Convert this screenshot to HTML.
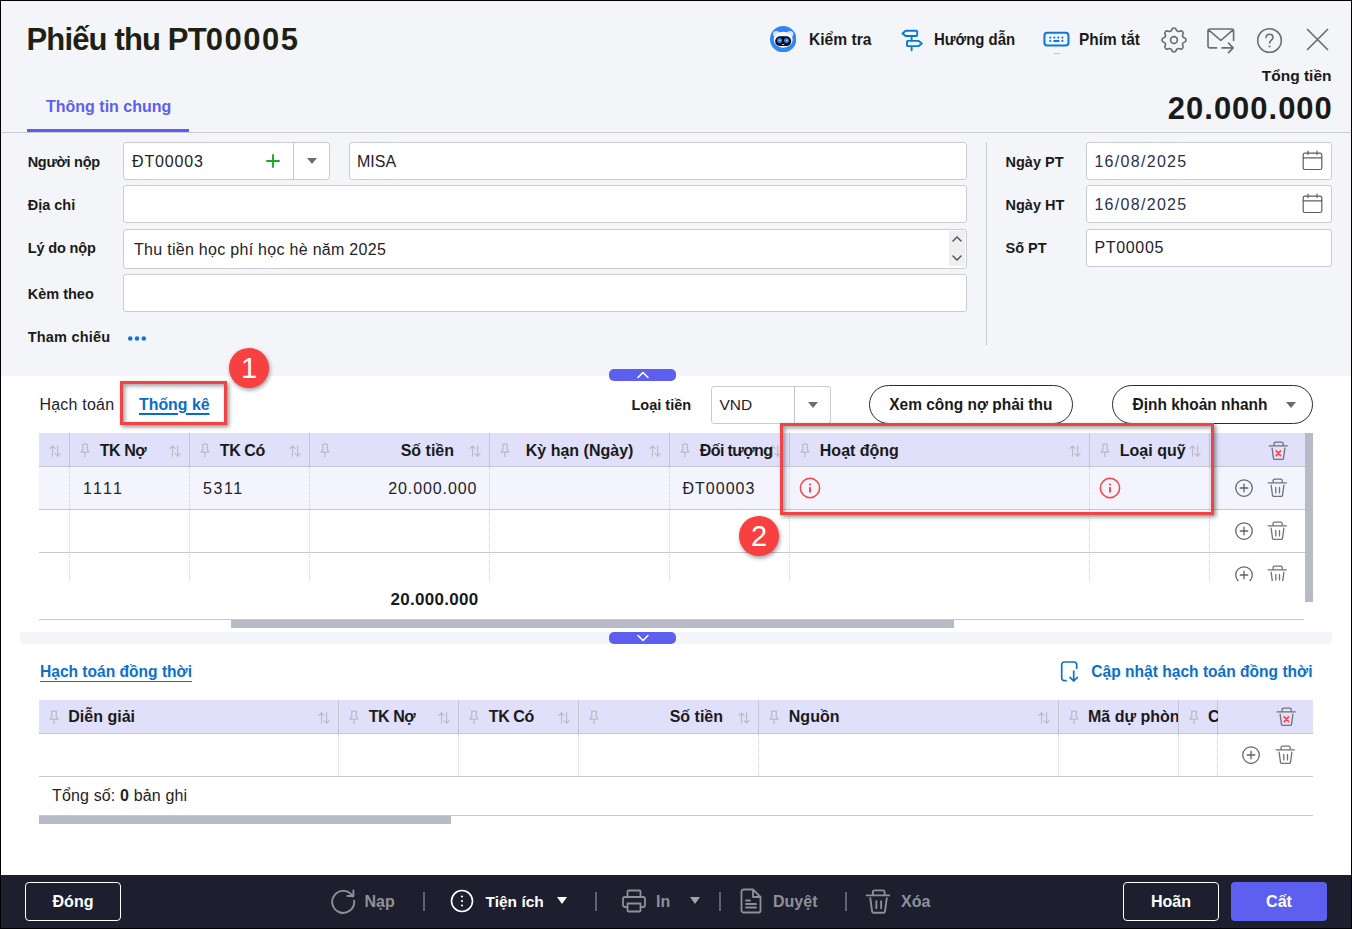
<!DOCTYPE html>
<html lang="vi">
<head>
<meta charset="utf-8">
<title>Phiếu thu PT00005</title>
<style>
*{box-sizing:border-box;margin:0;padding:0}
html,body{width:1352px;height:929px;overflow:hidden;background:#fff}
body{font-family:"Liberation Sans",sans-serif;color:#1f1f1f;font-size:16px;position:relative}
.abs{position:absolute}
#frame{position:absolute;left:0;top:0;width:1352px;height:929px;border:1px solid #000;border-bottom-width:1px;z-index:50;pointer-events:none}
#top{position:absolute;left:0;top:0;width:1352px;height:376px;background:#f4f5f8}
.t{position:absolute;white-space:nowrap;line-height:1}
.b{font-weight:bold}
.inp{position:absolute;background:#fff;border:1px solid #c9ccd3;border-radius:3px}
.lbl{position:absolute;font-weight:bold;font-size:14.500px;white-space:nowrap;line-height:1;color:#1a1a1a;left:27.700px}
.val{position:absolute;font-size:16px;white-space:nowrap;line-height:1;color:#1f2229}
/* grid */
.gh{position:absolute;background:#e0e0fb;border-bottom:1px solid #c6c8d0}
.hc{position:absolute;top:0;height:100%;font-weight:bold;font-size:16px;line-height:1;color:#1a1a1a;white-space:nowrap}
.vsep{position:absolute;width:1px;background:#c3c5cf}
.hline{position:absolute;height:1px;background:#c6c8d0}
.dot{position:absolute;width:0;border-left:1px dotted #cfd1d8}
#foot{position:absolute;left:0;top:875px;width:1352px;height:54px;background:#1d1f2e}
.fb{position:absolute;font-weight:bold;font-size:16px;line-height:1;white-space:nowrap}

.hd{font-size:16px;color:#1a1a1a}
.num{letter-spacing:.8px}
.pill{display:flex;align-items:center;justify-content:center;border:1px solid #2a2c33;border-radius:20px;background:#fff;font-weight:bold;font-size:15.500px;color:#1a1a1a;white-space:nowrap}
.anno{border:3px solid #f04345;box-shadow:2px 2px 4px rgba(0,0,0,.42),inset 2px 2px 4px rgba(0,0,0,.38);z-index:20}
.badge{width:40px;height:40px;border-radius:50%;background:#f7403f;color:#fff;font-size:29px;line-height:40px;text-align:center;box-shadow:1px 2px 4px rgba(0,0,0,.4);z-index:21}
.fbtn{display:flex;align-items:center;justify-content:center;border-radius:4px;font-weight:bold;font-size:16px;white-space:nowrap}
.fsep{top:892px;width:1.500px;height:19px;background:#5f6270}
.tb{font-size:16.500px;color:#1a1a1a;transform-origin:0 50%}
.dt{letter-spacing:1.300px;color:#2b3050;margin-left:-.6px}
</style>
</head>
<body>
<div id="top"></div>

<!-- HEADER -->
<div class="t b" id="title" style="left:26.500px;top:24px;font-size:31px;letter-spacing:-.85px;color:#1f1f14">Phiếu thu PT<span style="letter-spacing:1.500px">00005</span></div>

<div class="t b" id="tab" style="left:46px;top:99px;font-size:16px;color:#5d5fef">Thông tin chung</div>
<div class="abs" style="left:27px;top:129px;width:162px;height:3px;background:#5d5fef"></div>
<div class="abs" style="left:1px;top:132px;width:1350px;height:1px;background:#c9cbd2"></div>

<div class="t b" id="tongtien" style="right:20.500px;top:67.500px;font-size:15.500px;color:#1a1a1a">Tổng tiền</div>
<div class="t b" id="bignum" style="right:19.200px;top:93px;font-size:31px;letter-spacing:.98px;color:#1a1a1a">20.000.000</div>

<!-- HEADER TOOLBAR -->
<svg class="abs" style="left:769.900px;top:25.700px" width="26.400" height="26.400" viewBox="0 0 26.400 26.400"><circle cx="13.200" cy="13.200" r="13.200" fill="#2f87f5"/><ellipse cx="6.300" cy="7.900" rx="3.300" ry="2.900" fill="#d7e6fb"/><ellipse cx="20.100" cy="7.900" rx="3.300" ry="2.900" fill="#d7e6fb"/><ellipse cx="13.200" cy="13.700" rx="9.500" ry="8" fill="#f6f9fe"/><rect x="5.200" y="10.300" width="16" height="9.800" rx="4.900" fill="#070910"/><circle cx="9.600" cy="14.600" r="2.500" fill="#2f87f5"/><circle cx="16.500" cy="14.600" r="2.500" fill="#2f87f5"/><circle cx="9.900" cy="14.400" r=".7" fill="#eaf2fd"/><circle cx="16.800" cy="14.400" r=".7" fill="#eaf2fd"/><rect x="12" y="18" width="2.400" height=".9" rx=".4" fill="#cdd5e3"/></svg>
<div class="t b tb" style="left:808.500px;top:30.700px;transform:scaleX(.945)">Kiểm tra</div>
<svg class="abs" style="left:900px;top:28px" width="24" height="24" viewBox="0 0 24 24"><path d="M5.600 2.800h10.700a.9.900 0 0 1 .9.900v3.400a.9.900 0 0 1-.9.900H5.600L2.500 5.400zM7.900 12.900h10.800l3.100 2.600-3.100 2.600H7.900a.9.900 0 0 1-.9-.9v-3.400a.9.900 0 0 1 .9-.9zM11.600 8v4.900M11.600 18.100v4.200" fill="none" stroke="#0a78d8" stroke-width="1.900" stroke-linecap="round" stroke-linejoin="round"/></svg>
<div class="t b tb" style="left:934px;top:30.700px;transform:scaleX(.905)">Hướng dẫn</div>
<svg class="abs" style="left:1043px;top:31px" width="27" height="16" viewBox="0 0 27 16"><rect x="1.450" y="1.800" width="24" height="12.650" rx="2.800" fill="none" stroke="#0a79d9" stroke-width="2.050"/><g fill="#0a79d9"><circle cx="7.300" cy="6.600" r="1.050"/><circle cx="11.300" cy="6.600" r="1.050"/><circle cx="15.300" cy="6.600" r="1.050"/><circle cx="19.400" cy="6.600" r="1.050"/><circle cx="7.300" cy="9.900" r="1.050"/><circle cx="19.400" cy="9.900" r="1.050"/><rect x="10.200" y="8.900" width="6.400" height="2" rx="1"/></g></svg><div class="abs" style="left:1054px;top:53px;width:6px;height:1px;background:#c2bde6"></div>
<div class="t b tb" style="left:1078.500px;top:30.700px;transform:scaleX(.935)">Phím tắt</div>
<svg class="abs" style="left:1157.800px;top:23.500px" width="32" height="32" viewBox="0 0 24 24"><path d="M10.325 4.317c.426-1.756 2.924-1.756 3.350 0a1.724 1.724 0 0 0 2.573 1.066c1.543-.94 3.310.826 2.370 2.370a1.724 1.724 0 0 0 1.065 2.572c1.756.426 1.756 2.924 0 3.350a1.724 1.724 0 0 0-1.066 2.573c.94 1.543-.826 3.310-2.370 2.370a1.724 1.724 0 0 0-2.572 1.065c-.426 1.756-2.924 1.756-3.350 0a1.724 1.724 0 0 0-2.573-1.066c-1.543.94-3.310-.826-2.370-2.370a1.724 1.724 0 0 0-1.065-2.572c-1.756-.426-1.756-2.924 0-3.350a1.724 1.724 0 0 0 1.066-2.573c-.94-1.543.826-3.310 2.370-2.370.996.608 2.296.070 2.572-1.065z" fill="none" stroke="#6c6d70" stroke-width="1.250" stroke-linejoin="round"/><circle cx="12" cy="12" r="2.550" fill="none" stroke="#6c6d70" stroke-width="1.250"/></svg>
<svg class="abs" style="left:1207.400px;top:27.700px" width="28" height="26" viewBox="0 0 28 26"><path d="M9.500 19.900H2.800a1.800 1.800 0 0 1-1.800-1.800V2.800a1.800 1.800 0 0 1 1.800-1.800h22a1.800 1.800 0 0 1 1.800 1.800v9.700M1.600 1.800l12.200 10.700L26 1.800M15 19.900h11.200M21.500 15.200l4.700 4.700-4.700 4.700" fill="none" stroke="#6c6d70" stroke-width="1.650" stroke-linecap="round" stroke-linejoin="round"/></svg>
<svg class="abs" style="left:1256px;top:26.700px" width="27" height="27" viewBox="0 0 27 27"><circle cx="13.500" cy="13.500" r="11.800" fill="none" stroke="#6c6d70" stroke-width="1.600"/><path d="M10 10.600c0-2.100 1.500-3.400 3.500-3.400s3.500 1.300 3.500 3.200c0 2.700-3.400 2.800-3.400 5.600" fill="none" stroke="#6c6d70" stroke-width="1.550" stroke-linecap="round"/><circle cx="13.600" cy="19.500" r="1.050" fill="#6c6d70"/></svg>
<svg class="abs" style="left:1306px;top:28px" width="23" height="23" viewBox="0 0 23 23"><path d="M1.500 1.500l20 20M21.500 1.500l-20 20" stroke="#6c6d70" stroke-width="1.700" stroke-linecap="round"/></svg>

<!-- FORM -->
<div class="lbl" style="top:155px;letter-spacing:-.3px">Người nộp</div>
<div class="lbl" style="top:198px">Địa chỉ</div>
<div class="lbl" style="top:240.500px;letter-spacing:-.15px">Lý do nộp</div>
<div class="lbl" style="top:287px">Kèm theo</div>
<div class="lbl" style="top:330px;letter-spacing:.2px">Tham chiếu</div>

<div class="inp" style="left:123px;top:142px;width:207px;height:38px"></div>
<div class="vsep" style="left:293px;top:143px;height:36px"></div>
<div class="val" style="left:132px;top:154px;letter-spacing:.85px">ĐT00003</div>
<div class="inp" style="left:349px;top:142px;width:618px;height:38px"></div>
<div class="val" style="left:357px;top:154px">MISA</div>
<div class="inp" style="left:123px;top:185px;width:844px;height:38px"></div>
<div class="inp" style="left:123px;top:229px;width:844px;height:40px"></div>
<div class="val" style="left:134px;top:242px;letter-spacing:.29px">Thu tiền học phí học hè năm 2025</div>
<div class="inp" style="left:123px;top:274px;width:844px;height:38px"></div>

<div class="vsep" style="left:986px;top:142px;height:203px;background:#c9cbd2"></div>

<div class="lbl" style="left:1005.500px;top:155px">Ngày PT</div>
<div class="lbl" style="left:1005.500px;top:198px">Ngày HT</div>
<div class="lbl" style="left:1005.500px;top:240.500px">Số PT</div>
<div class="inp" style="left:1086px;top:142px;width:246px;height:38px"></div>
<div class="val dt" style="left:1095px;top:154px">16/08/2025</div>
<div class="inp" style="left:1086px;top:185px;width:246px;height:38px"></div>
<div class="val dt" style="left:1095px;top:197px">16/08/2025</div>
<div class="inp" style="left:1086px;top:229px;width:246px;height:38px"></div>
<div class="val" style="left:1094.500px;top:239.500px;letter-spacing:.65px">PT00005</div>

<!-- FORM ICONS -->
<svg class="abs" style="left:265px;top:153px" width="16" height="16" viewBox="0 0 16 16"><path d="M8 2v12M2 8h12" stroke="#1aab22" stroke-width="1.900" stroke-linecap="round"/></svg>
<div class="abs" style="left:307px;top:158px;width:0;height:0;border-left:5px solid transparent;border-right:5px solid transparent;border-top:6px solid #6b6e75"></div>
<svg class="abs" style="left:127px;top:335px" width="22" height="7" viewBox="0 0 22 7"><circle cx="3.200" cy="3.500" r="2.250" fill="#1273d9"/><circle cx="10" cy="3.500" r="2.250" fill="#1273d9"/><circle cx="16.800" cy="3.500" r="2.250" fill="#1273d9"/></svg>
<div class="abs" style="left:949px;top:231px;width:16px;height:35px;background:#efeff0"></div>
<svg class="abs" style="left:951px;top:233px" width="12" height="31" viewBox="0 0 12 31"><path d="M2 8l4-4 4 4M2 23l4 4 4-4" fill="none" stroke="#4d4f55" stroke-width="1.400" stroke-linecap="round" stroke-linejoin="round"/></svg>
<svg class="abs" style="left:1302px;top:150px" width="21" height="21" viewBox="0 0 21 21"><rect x="1.200" y="3.200" width="18.600" height="16.300" rx="1.800" fill="none" stroke="#5c5f66" stroke-width="1.200"/><path d="M1.200 7.800h18.600M6 1v3.500M15 1v3.500" stroke="#5c5f66" stroke-width="1.200" stroke-linecap="round"/></svg>
<svg class="abs" style="left:1302px;top:193px" width="21" height="21" viewBox="0 0 21 21"><rect x="1.200" y="3.200" width="18.600" height="16.300" rx="1.800" fill="none" stroke="#5c5f66" stroke-width="1.200"/><path d="M1.200 7.800h18.600M6 1v3.500M15 1v3.500" stroke="#5c5f66" stroke-width="1.200" stroke-linecap="round"/></svg>

<!-- SVG ICON DEFS -->
<svg width="0" height="0" style="position:absolute">
<defs>
<symbol id="i-pin" viewBox="0 0 10 14"><path d="M3 1h4.200v5.300l1.700 2.700H1.100l1.700-2.700V1zM5 9v4.400" fill="none" stroke="#b9bbc3" stroke-width="1.250" stroke-linecap="round" stroke-linejoin="round"/></symbol>
<symbol id="i-sort" viewBox="0 0 12 12"><path d="M3.500 11.300V.8M1 3.400L3.500.8 6 3.400M8.600.7v10.500M6.100 8.600l2.500 2.600 2.500-2.600" fill="none" stroke="#bbbdc5" stroke-width="1.200" stroke-linecap="round" stroke-linejoin="round"/></symbol>
<symbol id="i-trash" viewBox="0 0 20 20"><path d="M1.200 4.900h18.100M6.100 4.900V2.600a1.500 1.500 0 0 1 1.500-1.500h6.100a1.500 1.500 0 0 1 1.500 1.500v2.300M4.100 7.100l1.400 10.200q.2 1.100 1.300 1.100h7.400q1.100 0 1.300-1.100l1.400-10.200M8.800 9.400v5.500M12.500 9.400v5.500" fill="none" stroke="#707277" stroke-width="1.300" stroke-linecap="round" stroke-linejoin="round"/></symbol>
<symbol id="i-trashx" viewBox="0 0 20 20"><path d="M1.200 4.900h18.100M6.100 4.900V2.600a1.500 1.500 0 0 1 1.500-1.500h6.100a1.500 1.500 0 0 1 1.500 1.500v2.300M4.100 7.100l1.400 10.200q.2 1.100 1.300 1.100h7.400q1.100 0 1.300-1.100l1.400-10.200" fill="none" stroke="#707277" stroke-width="1.300" stroke-linecap="round" stroke-linejoin="round"/><path d="M8.200 9.900l4.400 4.700M12.600 9.900l-4.400 4.700" fill="none" stroke="#f5454a" stroke-width="1.600" stroke-linecap="round"/></symbol>
<symbol id="i-plus" viewBox="0 0 20 20"><circle cx="10" cy="10" r="8.250" fill="none" stroke="#606267" stroke-width="1.250"/><path d="M10 6.200v7.600M6.200 10h7.600" stroke="#606267" stroke-width="1.300" stroke-linecap="round"/></symbol>
<symbol id="i-info" viewBox="0 0 22 22"><circle cx="11" cy="11" r="9.650" fill="none" stroke="#f54247" stroke-width="1.500"/><circle cx="11" cy="7.500" r="1.050" fill="#f54247"/><path d="M11 10.800v4" stroke="#f54247" stroke-width="1.900" stroke-linecap="round"/></symbol>
</defs>
</svg>

<!-- GRID 1 TOOLBAR -->
<div class="t" id="hachtoan" style="left:39.500px;top:397px;letter-spacing:.2px;font-size:16px;color:#1f2229">Hạch toán</div>
<div class="t" id="thongke" style="left:139.300px;top:395.600px;font-size:16.500px;font-weight:bold;color:#0a6cc9;text-decoration:underline;text-underline-offset:2.500px;text-decoration-thickness:1.500px;transform:scaleX(.962);transform-origin:0 50%">Thống kê</div>
<div class="t b" id="loaitien" style="left:631.500px;top:398px;font-size:14.500px;color:#1a1a1a">Loại tiền</div>
<div class="inp" style="left:711px;top:386px;width:120px;height:38px"></div>
<div class="vsep" style="left:794px;top:387px;height:36px"></div>
<div class="val" style="left:719.500px;top:396.500px;font-size:15.500px">VND</div>
<div class="abs" style="left:807.500px;top:402px;width:0;height:0;border-left:5.500px solid transparent;border-right:5.500px solid transparent;border-top:6px solid #6b6e75"></div>

<div class="abs pill" style="left:869px;top:385px;width:204px;height:39px"><span style="display:inline-block;font-size:16.300px;transform:scaleX(.95)">Xem công nợ phải thu</span></div>
<div class="abs pill" style="left:1112px;top:385px;width:201px;height:39px;justify-content:flex-start;padding-left:16px"><span style="display:inline-block;font-size:16.300px;transform:scaleX(.95)">Định khoản nhanh</span></div>
<div class="abs" style="left:1285.500px;top:402px;width:0;height:0;border-left:5px solid transparent;border-right:5px solid transparent;border-top:6px solid #6b6b6b"></div>

<!-- collapse toggles -->
<div class="abs" style="left:609px;top:369px;width:67px;height:12px;background:#5d5fef;border-radius:5px"></div>
<svg class="abs" style="left:636px;top:370px" width="14" height="10" viewBox="0 0 14 10"><path d="M2 7.500l5-5 5 5" fill="none" stroke="#fff" stroke-width="1.600" stroke-linecap="round" stroke-linejoin="round"/></svg>
<div class="abs" style="left:20px;top:632px;width:1312px;height:12px;background:#f4f5f8;border-radius:4px"></div>
<div class="abs" style="left:609px;top:632px;width:67px;height:12px;background:#5d5fef;border-radius:5px"></div>
<svg class="abs" style="left:636px;top:633px" width="14" height="10" viewBox="0 0 14 10"><path d="M2 2.500l5 5 5-5" fill="none" stroke="#fff" stroke-width="1.600" stroke-linecap="round" stroke-linejoin="round"/></svg>

<!-- GRID 1 -->
<div class="gh" style="left:39px;top:433px;width:1266px;height:34px"></div>
<div class="abs" style="left:39px;top:467px;width:1266px;height:42px;background:#f3f4fd"></div>
<div class="hline" style="left:39px;top:509px;width:1266px"></div>
<div class="hline" style="left:39px;top:552px;width:1266px"></div>
<div class="hline" style="left:39px;top:619px;width:1265px"></div>
<!-- header separators -->
<div class="vsep" style="left:69px;top:433px;height:33px"></div>
<div class="vsep" style="left:189px;top:433px;height:33px"></div>
<div class="vsep" style="left:309px;top:433px;height:33px"></div>
<div class="vsep" style="left:489px;top:433px;height:33px"></div>
<div class="vsep" style="left:669px;top:433px;height:33px"></div>
<div class="vsep" style="left:789px;top:433px;height:33px"></div>
<div class="vsep" style="left:1089px;top:433px;height:33px"></div>
<div class="vsep" style="left:1209px;top:433px;height:33px"></div>
<!-- body dotted separators -->
<div class="dot" style="left:69px;top:467px;height:114px"></div>
<div class="dot" style="left:189px;top:467px;height:114px"></div>
<div class="dot" style="left:309px;top:467px;height:114px"></div>
<div class="dot" style="left:489px;top:467px;height:114px"></div>
<div class="dot" style="left:669px;top:467px;height:114px"></div>
<div class="dot" style="left:789px;top:467px;height:114px"></div>
<div class="dot" style="left:1089px;top:467px;height:114px"></div>
<div class="dot" style="left:1209px;top:467px;height:114px"></div>
<!-- header labels -->
<svg class="abs" style="left:49px;top:445px" width="12" height="12"><use href="#i-sort"/></svg>
<svg class="abs" style="left:80px;top:443px" width="10" height="14"><use href="#i-pin"/></svg>
<svg class="abs" style="left:169px;top:445px" width="12" height="12"><use href="#i-sort"/></svg>
<div class="t b hd" style="left:99.8px;top:443px;letter-spacing:-.45px">TK Nợ</div>
<svg class="abs" style="left:200px;top:443px" width="10" height="14"><use href="#i-pin"/></svg>
<svg class="abs" style="left:289px;top:445px" width="12" height="12"><use href="#i-sort"/></svg>
<div class="t b hd" style="left:219.8px;top:443px;letter-spacing:-.4px">TK Có</div>
<svg class="abs" style="left:320px;top:443px" width="10" height="14"><use href="#i-pin"/></svg>
<svg class="abs" style="left:469px;top:445px" width="12" height="12"><use href="#i-sort"/></svg>
<div class="t b hd" style="right:898px;top:443px">Số tiền</div>
<svg class="abs" style="left:500px;top:443px" width="10" height="14"><use href="#i-pin"/></svg>
<svg class="abs" style="left:649px;top:445px" width="12" height="12"><use href="#i-sort"/></svg>
<div class="t b hd" style="left:525.8px;top:443px;letter-spacing:0">Kỳ hạn (Ngày)</div>
<svg class="abs" style="left:680px;top:443px" width="10" height="14"><use href="#i-pin"/></svg>
<svg class="abs" style="left:769px;top:445px" width="12" height="12"><use href="#i-sort"/></svg>
<div class="t b hd" style="left:699.8px;top:443px;letter-spacing:-.6px">Đối tượng</div>
<svg class="abs" style="left:800px;top:443px" width="10" height="14"><use href="#i-pin"/></svg>
<svg class="abs" style="left:1069px;top:445px" width="12" height="12"><use href="#i-sort"/></svg>
<div class="t b hd" style="left:819.8px;top:443px;letter-spacing:0">Hoạt động</div>
<svg class="abs" style="left:1100px;top:443px" width="10" height="14"><use href="#i-pin"/></svg>
<svg class="abs" style="left:1189px;top:445px" width="12" height="12"><use href="#i-sort"/></svg>
<div class="t b hd" style="left:1119.8px;top:443px">Loại quỹ</div>
<svg class="abs" style="left:1268px;top:440.500px" width="20" height="20"><use href="#i-trashx"/></svg>
<!-- row values -->
<div class="val" style="left:83px;top:481px;letter-spacing:2.300px">1111</div>
<div class="val" style="left:203px;top:481px;letter-spacing:1.600px">5311</div>
<div class="val" style="right:874.600px;top:481px;letter-spacing:.92px">20.000.000</div>
<div class="val" style="left:682.500px;top:481px;letter-spacing:1px">ĐT00003</div>
<svg class="abs" style="left:799px;top:477px" width="22" height="22"><use href="#i-info"/></svg>
<svg class="abs" style="left:1099px;top:477px" width="22" height="22"><use href="#i-info"/></svg>
<div class="val b" style="right:873.600px;top:590.600px;font-size:17px;letter-spacing:.28px;color:#1a1a1a">20.000.000</div>
<!-- row actions -->
<svg class="abs" style="left:1233.500px;top:478px" width="20" height="20"><use href="#i-plus"/></svg>
<svg class="abs" style="left:1267px;top:478px" width="20" height="20"><use href="#i-trash"/></svg>
<svg class="abs" style="left:1233.500px;top:521px" width="20" height="20"><use href="#i-plus"/></svg>
<svg class="abs" style="left:1267px;top:521px" width="20" height="20"><use href="#i-trash"/></svg>
<div class="abs" style="left:1230px;top:560px;width:70px;height:21px;overflow:hidden">
<svg class="abs" style="left:3.500px;top:5px" width="20" height="20"><use href="#i-plus"/></svg>
<svg class="abs" style="left:37px;top:5px" width="20" height="20"><use href="#i-trash"/></svg>
</div>
<!-- scrollbars -->
<div class="abs" style="left:1305px;top:433px;width:8px;height:169px;background:#b7bbc5"></div>
<div class="abs" style="left:231px;top:620px;width:723px;height:8px;background:#b7bbc5"></div>

<!-- annotation boxes -->
<div class="abs anno" style="left:120px;top:381px;width:107px;height:44px"></div>
<div class="abs anno" style="left:780px;top:423px;width:434px;height:92px"></div>
<div class="abs badge" style="left:229px;top:348px">1</div>
<div class="abs badge" style="left:739px;top:516px">2</div>

<!-- SECTION 2 -->
<div class="t b" id="htdt" style="left:40px;top:662.600px;font-size:16.500px;transform:scaleX(.943);transform-origin:0 50%;text-underline-offset:3.500px;text-decoration-thickness:1.500px;color:#0b70cc;text-decoration:underline">Hạch toán đồng thời</div>
<svg class="abs" style="left:1060px;top:660px" width="20" height="23" viewBox="0 0 20 23"><path d="M6 20.700H4.500c-1.700 0-2.800-1.100-2.800-2.800V4.800c0-1.700 1.100-2.800 2.800-2.800h9.400c1.700 0 2.800 1.100 2.800 2.800v3.400" fill="none" stroke="#0b73d0" stroke-width="1.700" stroke-linecap="round"/><path d="M13.700 11v10M13.700 21l-3.700-3.700M13.700 21l3.700-3.700" fill="none" stroke="#0b73d0" stroke-width="1.700" stroke-linecap="round" stroke-linejoin="round"/></svg>
<div class="t b" id="capnhat" style="right:39.500px;top:662.600px;font-size:16.500px;transform:scaleX(.943);transform-origin:100% 50%;color:#0b70cc">Cập nhật hạch toán đồng thời</div>

<div class="gh" style="left:39px;top:700px;width:1274px;height:34px"></div>
<div class="hline" style="left:39px;top:776px;width:1274px"></div>
<div class="hline" style="left:39px;top:815px;width:1274px"></div>
<div class="vsep" style="left:338px;top:700px;height:33px"></div>
<div class="vsep" style="left:458px;top:700px;height:33px"></div>
<div class="vsep" style="left:578px;top:700px;height:33px"></div>
<div class="vsep" style="left:758px;top:700px;height:33px"></div>
<div class="vsep" style="left:1058px;top:700px;height:33px"></div>
<div class="vsep" style="left:1178px;top:700px;height:33px"></div>
<div class="vsep" style="left:1217px;top:700px;height:33px"></div>
<div class="dot" style="left:338px;top:734px;height:42px"></div>
<div class="dot" style="left:458px;top:734px;height:42px"></div>
<div class="dot" style="left:578px;top:734px;height:42px"></div>
<div class="dot" style="left:758px;top:734px;height:42px"></div>
<div class="dot" style="left:1058px;top:734px;height:42px"></div>
<div class="dot" style="left:1178px;top:734px;height:42px"></div>
<div class="dot" style="left:1217px;top:734px;height:42px"></div>

<svg class="abs" style="left:49px;top:709.500px" width="10" height="14"><use href="#i-pin"/></svg>
<svg class="abs" style="left:318px;top:712px" width="12" height="12"><use href="#i-sort"/></svg>
<div class="t b hd" style="left:68.300px;top:708.500px">Diễn giải</div>
<svg class="abs" style="left:349px;top:709.500px" width="10" height="14"><use href="#i-pin"/></svg>
<svg class="abs" style="left:438px;top:712px" width="12" height="12"><use href="#i-sort"/></svg>
<div class="t b hd" style="left:368.8px;top:708.500px;letter-spacing:-.45px">TK Nợ</div>
<svg class="abs" style="left:469px;top:709.500px" width="10" height="14"><use href="#i-pin"/></svg>
<svg class="abs" style="left:558px;top:712px" width="12" height="12"><use href="#i-sort"/></svg>
<div class="t b hd" style="left:488.8px;top:708.500px;letter-spacing:-.4px">TK Có</div>
<svg class="abs" style="left:589px;top:709.500px" width="10" height="14"><use href="#i-pin"/></svg>
<svg class="abs" style="left:738px;top:712px" width="12" height="12"><use href="#i-sort"/></svg>
<div class="t b hd" style="right:629px;top:708.500px">Số tiền</div>
<svg class="abs" style="left:769px;top:709.500px" width="10" height="14"><use href="#i-pin"/></svg>
<svg class="abs" style="left:1038px;top:712px" width="12" height="12"><use href="#i-sort"/></svg>
<div class="t b hd" style="left:788.8px;top:708.500px">Nguồn</div>
<svg class="abs" style="left:1069px;top:709.500px" width="10" height="14"><use href="#i-pin"/></svg>
<div class="abs" style="left:1088px;top:700px;width:90px;height:33px;overflow:hidden"><div class="t b hd" style="left:0;top:8.500px">Mã dự phòng</div></div>
<svg class="abs" style="left:1189px;top:709.500px" width="10" height="14"><use href="#i-pin"/></svg>
<div class="abs" style="left:1208px;top:700px;width:10px;height:33px;overflow:hidden"><div class="t b hd" style="left:0;top:8.500px">C</div></div>
<svg class="abs" style="left:1276px;top:707px" width="20" height="20"><use href="#i-trashx"/></svg>
<svg class="abs" style="left:1241px;top:745px" width="20" height="20"><use href="#i-plus"/></svg>
<svg class="abs" style="left:1275px;top:745px" width="20" height="20"><use href="#i-trash"/></svg>

<div class="t" id="tongso" style="left:52px;top:788px;font-size:16px;letter-spacing:.15px;color:#1f2229">Tổng số: <b>0</b> bản ghi</div>
<div class="abs" style="left:39px;top:816px;width:412px;height:8px;background:#b7bbc5"></div>

<!-- FOOTER -->
<div id="foot"></div>
<div class="abs fbtn" style="left:25px;top:882px;width:96px;height:39px;border:1px solid #fff;color:#fff">Đóng</div>
<div class="abs fbtn" style="left:1123px;top:882px;width:96px;height:39px;border:1px solid #fff;color:#fff">Hoãn</div>
<div class="abs fbtn" style="left:1231px;top:882px;width:96px;height:39px;background:#5d5fef;color:#fff">Cất</div>

<svg class="abs" style="left:330px;top:888px" width="26" height="28" viewBox="0 0 26 28"><path d="M24.140 12.750A11 11 0 1 1 22.730 8.400M23.400 2.400V8H17.400" fill="none" stroke="#8d909b" stroke-width="1.900" stroke-linecap="round" stroke-linejoin="round"/></svg>
<div class="fb" style="left:364.500px;top:894px;color:#8d909b">Nạp</div>
<div class="abs fsep" style="left:423px"></div>
<svg class="abs" style="left:450px;top:889px" width="24" height="24" viewBox="0 0 24 24"><circle cx="12" cy="12" r="10.500" fill="none" stroke="#fff" stroke-width="1.600"/><circle cx="12" cy="7.500" r="1.100" fill="#fff"/><circle cx="12" cy="12" r="1.100" fill="#fff"/><circle cx="12" cy="16.500" r="1.100" fill="#fff"/></svg>
<div class="fb" style="left:485.500px;top:894px;font-size:15.500px;color:#fff">Tiện ích</div>
<div class="abs" style="left:557px;top:897px;width:0;height:0;border-left:5.500px solid transparent;border-right:5.500px solid transparent;border-top:7px solid #fff"></div>
<div class="abs fsep" style="left:595px"></div>
<svg class="abs" style="left:621px;top:888px" width="26" height="26" viewBox="0 0 26 26"><path d="M6.500 9V3.500a1 1 0 0 1 1-1h11a1 1 0 0 1 1 1V9M6.500 19h-2.500a2 2 0 0 1-2-2v-6a2 2 0 0 1 2-2h18a2 2 0 0 1 2 2v6a2 2 0 0 1-2 2h-2.500M6.500 15.500h13v7a1 1 0 0 1-1 1h-11a1 1 0 0 1-1-1z" fill="none" stroke="#8d909b" stroke-width="1.800" stroke-linejoin="round"/></svg>
<div class="fb" style="left:656px;top:894px;color:#8d909b">In</div>
<div class="abs" style="left:690px;top:897px;width:0;height:0;border-left:5.500px solid transparent;border-right:5.500px solid transparent;border-top:7px solid #a0a3ad"></div>
<div class="abs fsep" style="left:719px"></div>
<svg class="abs" style="left:740px;top:888px" width="22" height="26" viewBox="0 0 22 26"><path d="M3.500 1.500h9.500l7.500 7.500v13.500a2 2 0 0 1-2 2h-15a2 2 0 0 1-2-2v-19a2 2 0 0 1 2-2zM13 1.500v7.500h7.500" fill="none" stroke="#8d909b" stroke-width="1.800" stroke-linejoin="round"/><path d="M6 12.500h4M6 16h10M6 19.500h10" stroke="#8d909b" stroke-width="1.800" stroke-linecap="round"/></svg>
<div class="fb" style="left:773px;top:894px;color:#8d909b">Duyệt</div>
<div class="abs fsep" style="left:845px"></div>
<svg class="abs" style="left:864.700px;top:889.400px" width="25.800" height="25.800" viewBox="0 0 20 20"><path d="M1.200 4.900h18.100M6.100 4.900V2.600a1.500 1.500 0 0 1 1.500-1.500h6.100a1.500 1.500 0 0 1 1.500 1.500v2.300M4.100 7.100l1.400 10.200q.2 1.100 1.300 1.100h7.400q1.100 0 1.300-1.100l1.400-10.200M8.800 9.400v5.500M12.500 9.400v5.500" fill="none" stroke="#8d909b" stroke-width="1.450" stroke-linecap="round" stroke-linejoin="round"/></svg>
<div class="fb" style="left:901px;top:894px;color:#8d909b">Xóa</div>

<div id="frame"></div>
</body>
</html>
